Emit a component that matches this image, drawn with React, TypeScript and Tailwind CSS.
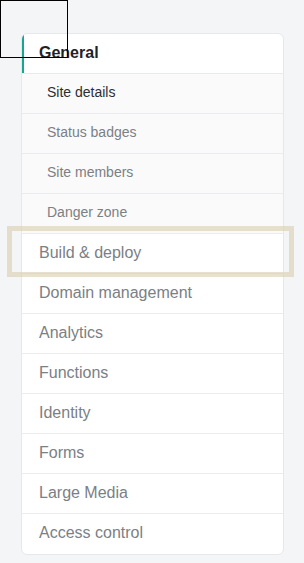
import React from 'react';

const subItems = ['Site details', 'Status badges', 'Site members', 'Danger zone'];
const topItems = [
  'Build & deploy',
  'Domain management',
  'Analytics',
  'Functions',
  'Identity',
  'Forms',
  'Large Media',
  'Access control',
];

export default function App() {
  return (
    <div
      className="relative min-h-[563px] bg-[#f4f5f6] pt-[33px] pl-[21px] pr-[20px] pb-[10px]"
      style={{ fontFamily: '"Liberation Sans", Arial, sans-serif' }}
    >
      <nav className="overflow-hidden rounded-md border border-[#e7e8ea] bg-white">
        <div className="relative flex h-10 items-center border-b border-[#e9eaec] pb-[2px] pl-[17px] text-[16px] font-bold text-[#1f2328]">
          <span className="absolute left-0 top-0 h-full w-[2px] bg-[#15a794]" />
          General
        </div>
        {subItems.map((item, i) => (
          <div
            key={item}
            className={`flex h-10 items-center border-b border-[#ececee] bg-[#fafafa] pb-[2px] pl-[25px] text-[14px] ${
              i === 0 ? 'text-[#2b2f33]' : 'text-[#7b8085]'
            }`}
          >
            {item}
          </div>
        ))}
        {topItems.map((item, i) => (
          <div
            key={item}
            className={`flex h-10 items-center pb-[2px] pl-[17px] text-[16px] text-[#7b8085] ${
              i < topItems.length - 1 ? 'border-b border-[#ececee]' : ''
            }`}
          >
            {item}
          </div>
        ))}
      </nav>

      {/* overlays */}
      <div className="pointer-events-none absolute left-0 top-0 h-[58px] w-[68px] border border-black" />
      <div className="pointer-events-none absolute left-[7px] top-[226px] h-[51px] w-[287px] border-[5px] border-[#d9cdb0]/60" />
    </div>
  );
}
